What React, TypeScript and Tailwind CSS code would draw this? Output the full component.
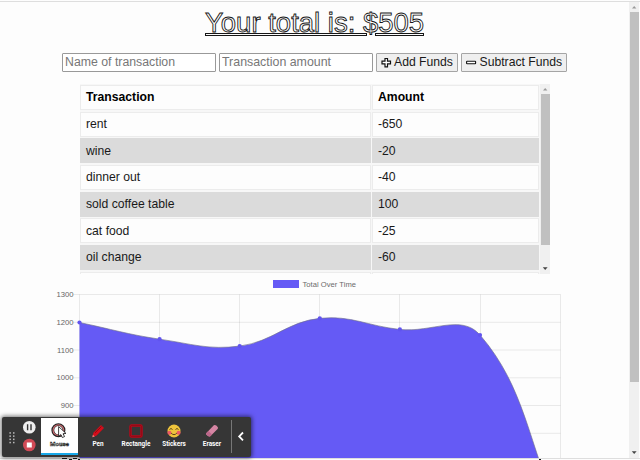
import React from "react";

const rows: [string, string][] = [
  ["rent", "-650"],
  ["wine", "-20"],
  ["dinner out", "-40"],
  ["sold coffee table", "100"],
  ["cat food", "-25"],
  ["oil change", "-60"],
];

const totals = [1200, 1140, 1115, 1215, 1175, 1155, 505];
const X0 = 79.5;
const STEP = 80.1;
const valueY = (v: number) => 44.5 + (1200 - v) * 0.2775;

function curvePath() {
  const pts = totals.map((v, i) => ({ x: X0 + i * STEP, y: valueY(v) }));
  const ctl = pts.map((p, i) => {
    const a = pts[i - 1] ?? p;
    const b = pts[i + 1] ?? p;
    const d0 = Math.hypot(p.x - a.x, p.y - a.y);
    const d1 = Math.hypot(b.x - p.x, b.y - p.y);
    const fa = (0.4 * d0) / (d0 + d1);
    const fb = (0.4 * d1) / (d0 + d1);
    return {
      inX: p.x - fa * (b.x - a.x),
      inY: p.y - fa * (b.y - a.y),
      outX: p.x + fb * (b.x - a.x),
      outY: p.y + fb * (b.y - a.y),
    };
  });
  return pts
    .map((p, i) =>
      i === 0
        ? `M${p.x} ${p.y}`
        : `C${ctl[i - 1].outX} ${ctl[i - 1].outY} ${ctl[i].inX} ${ctl[i].inY} ${p.x} ${p.y}`
    )
    .join(" ");
}

function Chart() {
  const line = curvePath();
  return (
    <svg width="628" height="180" viewBox="0 0 628 180" className="block">
      <rect x="273" y="2" width="26" height="8" fill="#655af5" />
      <text x="302.5" y="8.6" fontSize="7.6" fill="#6b6b6b" textLength="53.5">
        Total Over Time
      </text>
      <g stroke="#000" strokeOpacity="0.08">
        {[0, 1, 2, 3, 4, 5].map((i) => (
          <path key={i} d={`M73.5 ${(16.5 + i * 27.75).toFixed(1)}H560.5`} />
        ))}
        {totals.map((_, i) => (
          <path key={i} d={`M${Math.floor(X0 + i * STEP) + 0.5} 16.5V180`} />
        ))}
      </g>
      {[1300, 1200, 1100, 1000, 900].map((v, i) => (
        <text key={v} x="73.5" y={19 + i * 27.75} fontSize="7.7" fill="#666" textAnchor="end">
          {v}
        </text>
      ))}
      <path d={`${line} V260 H${X0} Z`} fill="#655af5" />
      <path d={line} fill="none" stroke="#70708c" strokeOpacity="0.65" />
      {totals.map((v, i) => (
        <circle key={i} cx={X0 + i * STEP} cy={valueY(v)} r="2.1" fill="#6154ef" />
      ))}
    </svg>
  );
}

function ScrollRail({ thumb }: { thumb: string }) {
  return (
    <div className="flex h-full flex-col items-center bg-[#f0f0f0]">
      <svg width="10" height="10" viewBox="0 0 10 10" className="shrink-0">
        <path d="M3 6.5L5.2 4L7.4 6.5Z" fill="#999" />
      </svg>
      <div className={`ml-px w-[9px] bg-[#c0c0c0] ${thumb}`} />
      <svg width="10" height="10" viewBox="0 0 10 10" className="mt-auto shrink-0">
        <path d="M2.8 3.3H7.6L5.2 6Z" fill="#444" />
      </svg>
    </div>
  );
}

function Tool({ label, children }: { label: string; children: React.ReactNode }) {
  return (
    <div className="flex w-[38px] flex-col items-center pt-[5px]">
      <svg width="18" height="18" viewBox="0 0 18 18">{children}</svg>
      <span className="mt-[1px] text-[6.4px] font-bold leading-[7px] text-white">{label}</span>
    </div>
  );
}

function Toolbar() {
  return (
    <div className="absolute left-[2px] top-[417px] flex h-[40px] w-[249px] rounded-[2px] bg-[#363636] font-[Roboto,sans-serif] shadow-[0_0_4px_1px_rgba(0,0,0,0.55)]">
      <svg width="39" height="40" viewBox="0 0 39 40" className="shrink-0">
        {[16, 19.2, 22.4, 25.6].map((y) => (
          <g key={y} fill="#bbb">
            <rect x="7.4" y={y - 0.8} width="1.5" height="1.5" />
            <rect x="11" y={y - 0.8} width="1.5" height="1.5" />
          </g>
        ))}
        <circle cx="27.3" cy="10.2" r="6.3" fill="#eee" />
        <path d="M25.6 7.2V13.2M29 7.2V13.2" stroke="#333" strokeWidth="1.4" />
        <circle cx="27.3" cy="28" r="6.3" fill="#d04a56" />
        <rect x="24.8" y="25.5" width="5" height="5" fill="#fff" />
      </svg>
      <div className="mt-px flex h-[37px] w-[37px] flex-col items-center border-b-2 border-[#18a8e8] bg-white pt-[4px]">
        <svg width="20" height="18" viewBox="0 0 20 18">
          <circle cx="8.4" cy="8.2" r="5.6" fill="#fff" stroke="#222" strokeWidth="2.8" />
          <circle cx="8.4" cy="8.2" r="5.3" fill="none" stroke="#c96a70" strokeWidth="1.2" />
          <path d="M8.6 4.6L16 11.4L13 11.8L14.6 14.6L12.3 15.5L10.9 12.6L8.6 14.4Z" fill="#fff" stroke="#111" strokeWidth="0.8" />
        </svg>
        <span className="text-[6.2px] font-bold leading-[8px] text-white [-webkit-text-stroke:0.5px_#222]">Mouse</span>
      </div>
      <div className="ml-[1px] flex">
        <Tool label="Pen">
          <path d="M3.5 15L4.4 10.8L12 3L15 6L7.4 13.8Z" fill="#d40d1a" />
          <path d="M6 10.8L12.5 4.5" stroke="#8d0912" />
          <path d="M3.3 15.2L3.9 12.7L5.8 14.6Z" fill="#f08080" />
        </Tool>
        <Tool label="Rectangle">
          <rect x="3.5" y="3.5" width="11" height="11" rx="1" fill="none" stroke="#b90719" strokeWidth="2.4" />
          <rect x="3.5" y="3.5" width="11" height="11" rx="1" fill="none" stroke="#780812" strokeWidth="0.5" />
        </Tool>
        <Tool label="Stickers">
          <circle cx="9" cy="9" r="6.5" fill="#efc43c" />
          <path d="M4.5 7.5Q6 5.5 7.5 7.5M10.5 7.5Q12 5.5 13.5 7.5M6 11Q9 14.3 12 11" fill="none" stroke="#5e4519" />
          <circle cx="4.4" cy="10.8" r="2" fill="#ed5a65" />
          <circle cx="13.6" cy="10.8" r="2" fill="#ed5a65" />
        </Tool>
        <Tool label="Eraser">
          <path d="M3.2 11.2L10.8 3.2Q12 2.4 13.3 3.6L14.7 5Q15.4 6 14.6 7L7.3 14.2Q6 15 5 14.1L3.4 12.8Q2.8 12 3.2 11.2Z" fill="#d585a3" />
          <path d="M3.2 11.2L5.3 9L9.2 12.4L7.3 14.2Q6 15 5 14.1L3.4 12.8Q2.8 12 3.2 11.2Z" fill="#bc678a" />
        </Tool>
      </div>
      <svg width="19" height="40" viewBox="0 0 19 40" className="shrink-0">
        <path d="M0.5 3V36" stroke="#777" />
        <path d="M12 15.5L8.2 19.4L12 23.3" fill="none" stroke="#fff" strokeWidth="1.8" />
      </svg>
    </div>
  );
}

const cell = "flex items-center border border-[#ececec] pl-[5px]";

export default function App() {
  return (
    <div className="relative h-[460px] w-[640px] overflow-hidden bg-[#fdfdfd] font-['Liberation_Sans',Arial,sans-serif] text-[12.2px] text-[#191919]">
      <div className="mt-px flex h-[458px] border-b border-t border-[#dedede]">
        <main className="w-[628px] shrink-0">
          <header className="flex h-[51px] flex-col pl-[205px] pt-[6px]">
            <h1 className="h-[25px] whitespace-nowrap text-[27.5px] leading-[30px] text-white [-webkit-text-stroke:0.9px_#161616]">
              Your total is: $505
            </h1>
            <div className="flex h-[3px] w-[219px] gap-[8px]">
              <i className="h-[3px] w-[162px] border border-[#161616]" />
              <i className="h-[3px] flex-1 border border-[#161616]" />
            </div>
          </header>
          <form className="flex h-[19px] items-stretch pl-[62px]">
            <input placeholder="Name of transaction" className="mr-[3px] w-[154px] rounded-[1px] border border-[#999] bg-white px-[2px] text-[12.3px] placeholder:text-[#777]" />
            <input placeholder="Transaction amount" className="mr-[3px] w-[154px] rounded-[1px] border border-[#999] bg-white px-[2px] text-[12.4px] placeholder:text-[#777]" />
            <button type="button" className="mr-[3px] flex w-[82px] items-center whitespace-nowrap rounded-[1px] border border-[#a5a5a5] bg-[#efefef] pl-[4px]">
              <svg width="13" height="12" viewBox="0 0 13 12" className="shrink-0">
                <path d="M4 1.5H6.5V4.2H9.5V6.8H6.5V9.8H4V6.8H1V4.2H4Z" fill="#fff" stroke="#111" strokeWidth="1.2" />
              </svg>
              Add Funds
            </button>
            <button type="button" className="flex w-[106px] items-center whitespace-nowrap rounded-[1px] border border-[#a5a5a5] bg-[#efefef] pl-[4px]">
              <svg width="13.5" height="12" viewBox="0 0 13.5 12" className="shrink-0">
                <rect x="0.6" y="4.2" width="9" height="2.6" rx="0.5" fill="#fff" stroke="#111" strokeWidth="1.1" />
              </svg>
              Subtract Funds
            </button>
          </form>
          <section className="ml-[80px] mt-[12px] flex h-[190px] w-[470px] overflow-hidden">
            <div className="flex w-[460px] shrink-0 flex-col gap-[1.7px] bg-[#f7f7f7] pr-[1px] pt-px">
              <div className="grid h-[25px] shrink-0 grid-cols-[291px_167px] gap-px font-bold text-black">
                <div className={`${cell} bg-[#fdfdfd]`}>Transaction</div>
                <div className={`${cell} bg-[#fdfdfd]`}>Amount</div>
              </div>
              {rows.map(([name, amount], i) => (
                <div key={name} className={`grid h-[25px] shrink-0 grid-cols-[291px_167px] gap-px ${i % 2 ? "[&>div]:border-[#dbdbdb] [&>div]:bg-[#dbdbdb]" : "[&>div]:bg-[#fdfdfd]"}`}>
                  <div className={cell}>{name}</div>
                  <div className={cell}>{amount}</div>
                </div>
              ))}
              <div className="grid h-[25px] shrink-0 grid-cols-[291px_167px] gap-px">
                <div className={`${cell} bg-[#fdfdfd]`} />
                <div className={`${cell} bg-[#fdfdfd]`} />
              </div>
            </div>
            <ScrollRail thumb="h-[151px]" />
          </section>
          <div className="mt-[4px]">
            <Chart />
          </div>
        </main>
        <aside className="ml-[1px] w-[10px] shrink-0">
          <ScrollRail thumb="h-[370px]" />
        </aside>
      </div>
      <Toolbar />
      <svg width="480" height="3" viewBox="0 0 480 3" className="absolute left-[62px] top-[457px]">
        <path d="M0 1.5H5M7 2.5H10M11 1.5H15M16 2.5H18M477 2.5H479" stroke="#111" />
      </svg>
    </div>
  );
}
